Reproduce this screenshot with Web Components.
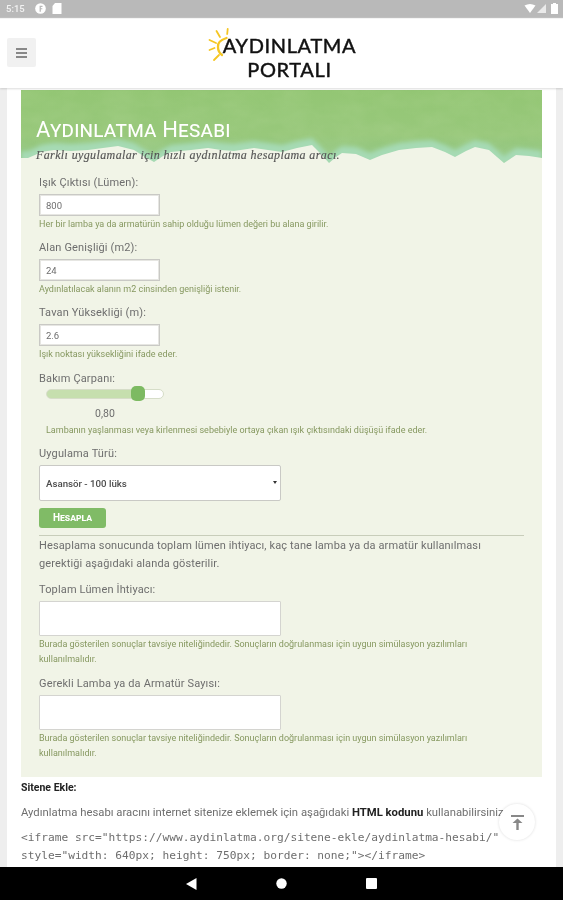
<!DOCTYPE html>
<html lang="tr">
<head>
<meta charset="utf-8">
<title>Aydınlatma Hesabı</title>
<style>
  html, body { margin: 0; padding: 0; background: #eee; }
  body { font-family: "Roboto", "Liberation Sans", sans-serif; }
  app-shell { filter: blur(0.5px); }
</style>
</head>
<body>
<app-shell>
  <status-bar slot="top"></status-bar>
  <site-header slot="top"></site-header>

  <calc-panel>
    <calc-field label="Işık Çıktısı (Lümen):" hint="Her bir lamba ya da armatürün sahip olduğu lümen değeri bu alana girilir.">800</calc-field>
    <calc-field label="Alan Genişliği (m2):" hint="Aydınlatılacak alanın m2 cinsinden genişliği istenir.">24</calc-field>
    <calc-field label="Tavan Yüksekliği (m):" hint="Işık noktası yüksekliğini ifade eder.">2.6</calc-field>
    <calc-slider label="Bakım Çarpanı:" value="0,80" hint="Lambanın yaşlanması veya kirlenmesi sebebiyle ortaya çıkan ışık çıktısındaki düşüşü ifade eder."></calc-slider>
    <calc-select label="Uygulama Türü:">Asansör - 100 lüks</calc-select>
    <calc-result intro="Hesaplama sonucunda toplam lümen ihtiyacı, kaç tane lamba ya da armatür kullanılması gerektiği aşağıdaki alanda gösterilir."></calc-result>
  </calc-panel>

  <embed-info></embed-info>
  <scroll-top slot="over"></scroll-top>
  <nav-bar slot="bottom"></nav-bar>
</app-shell>

<script>
const BASE_FONT = '"Roboto", "Liberation Sans", sans-serif';

class AppShell extends HTMLElement {
  constructor() {
    super();
    this.attachShadow({ mode: 'open' }).innerHTML = `
      <style>
        :host { display: flex; flex-direction: column; width: 563px; height: 900px; overflow: hidden; position: relative; background: #eee; }
        .page { flex: 1; min-height: 0; overflow: hidden; margin: 0 7px; background: #fff; padding: 2px 14px 0; }
      </style>
      <slot name="top"></slot>
      <div class="page"><slot></slot></div>
      <slot name="over"></slot>
      <slot name="bottom"></slot>
    `;
  }
}

class StatusBar extends HTMLElement {
  constructor() {
    super();
    this.attachShadow({ mode: 'open' }).innerHTML = `
      <style>
        :host { display: flex; align-items: center; height: 17px; background: #b9b9b9; color: #f2f2f2; padding: 0 5px 0 6px; font: 500 9.5px ${BASE_FONT}; box-sizing: border-box; box-shadow: 0 1px 1px rgba(0,0,0,.25); position: relative; z-index: 3; }
        .left { display: flex; align-items: center; gap: 10px; }
        .left svg + svg { margin-left: -4px; }
        .right { margin-left: auto; display: flex; align-items: center; }
        .right svg:first-child { margin-right: 1px; }
        .right svg:last-child { margin-left: 5px; }
        svg { display: block; }
      </style>
      <div class="left">
        <span>5:15</span>
        <svg width="11" height="11" viewBox="0 0 12 12"><circle cx="6" cy="6" r="5.8" fill="#fff"/><path d="M5 9.5V3h3.2v1.4H6.4v1.2H8v1.3H6.4v2.6z" fill="#b9b9b9"/></svg>
        <svg width="10" height="11" viewBox="0 0 9 11"><path d="M2.5 0H9v11H0V3z" fill="#fff"/></svg>
      </div>
      <div class="right">
        <svg width="12" height="9" viewBox="0 0 11 9"><path d="M0 1.6Q5.5-1.6 11 1.6L5.5 9z" fill="#fff"/></svg>
        <svg width="9" height="9" viewBox="0 0 9 9"><path d="M9 0V9H0z" fill="#fff" opacity=".7"/></svg>
        <svg width="7" height="11" viewBox="0 0 7 11"><path d="M2 0h3v1h2v10H0V1h2z" fill="#fff"/></svg>
      </div>
    `;
  }
}

class SiteHeader extends HTMLElement {
  constructor() {
    super();
    this.attachShadow({ mode: 'open' }).innerHTML = `
      <style>
        :host { display: grid; grid-template-columns: 1fr auto 1fr; align-items: center; height: 71px; background: #fff; box-sizing: border-box; padding: 0 7px; box-shadow: 0 1px 2px rgba(0,0,0,.14); position: relative; z-index: 2; }
        .menu { width: 29px; height: 29px; background: #f1f1f1; border-radius: 2px; display: flex; align-items: center; justify-content: center; justify-self: start; }
        .logo { display: flex; align-items: flex-start; align-self: start; }
        .sun { display: block; margin: 9px -10px 0 0; }
        .name { font: 400 20px/24px "Lato", "Liberation Sans", sans-serif; letter-spacing: .65px; color: #111; text-align: center; -webkit-text-stroke: .45px #111; padding-top: 16px; }
      </style>
      <div class="menu">
        <svg width="11" height="10" viewBox="0 0 11 10"><path d="M0 1h11M0 5h11M0 9h11" stroke="#666" stroke-width="1.6"/></svg>
      </div>
      <div class="logo">
        <svg class="sun" width="26" height="36" viewBox="0 0 26 36" fill="none" stroke="#f5c623" stroke-width="1.8" stroke-linecap="round">
          <path d="M19.500 12Q10 15 11 21Q11 26 15 29" stroke-width="2.300"/>
          <path d="M20.700 3L20.200 8M9.500 5L13 11M2.500 14L9 17M2.500 24L7.500 22M7 34L12 29"/>
        </svg>
        <div class="name">AYDINLATMA<br>PORTALI</div>
      </div>
      <div></div>
    `;
  }
}

class CalcPanel extends HTMLElement {
  constructor() {
    super();
    // y values of the torn paper edge, in hero coordinates
    const edge = '0 68 7 68 14 65 20 62 33 60 50 61 67 60 82 58 97 56 113 60 124 67 133 72 142 66 150 62 170 60 187 58 200 60 213 61 233 58 247 60 261 62 276 58 291 55 300 64 308 73 315 67 321 63 335 64 342 67 349 70 361 65 378 60 395 58 411 57 424 62 434 67 445 61 454 57 468 60 476 67 483 73 495 65 508 66 521 68';
    this.attachShadow({ mode: 'open' }).innerHTML = `
      <style>
        :host { display: block; background: #f1f4e7; height: 687px; box-sizing: border-box; width: 521px; }
        .hero { position: relative; height: 75px; box-sizing: border-box; padding: 28px 15px 0; overflow: hidden; }
        .hero svg { position: absolute; inset: 0; width: 100%; height: 100%; }
        h1 { position: relative; margin: 0; font: 400 22px/24px ${BASE_FONT}; font-variant: small-caps; color: #fff; letter-spacing: .2px; }
        p { position: relative; margin: 5px 0 0; font: italic 12px/16px "Liberation Serif", serif; color: #555; letter-spacing: .38px; -webkit-text-stroke: .15px #555; }
        .body { padding: 10px 18px 0; }
      </style>
      <div class="hero">
        <svg viewBox="0 0 521 75">
          <defs>
            <linearGradient id="g" x1="0" y1="0" x2="0" y2="1">
              <stop offset="0" stop-color="#93c674"/>
              <stop offset=".6" stop-color="#98c87b"/>
              <stop offset="1" stop-color="#8fc585"/>
            </linearGradient>
            <filter id="soft" x="-5%" y="-50%" width="110%" height="200%"><feGaussianBlur stdDeviation="2"/></filter>
            <filter id="mottle" x="0" y="0" width="100%" height="100%">
              <feTurbulence type="fractalNoise" baseFrequency=".035 .06" numOctaves="3" seed="4"/>
              <feColorMatrix values="0 0 0 0 1  0 0 0 0 1  0 0 0 0 .8  .5 0 0 0 -.14"/>
            </filter>
          </defs>
          <rect width="521" height="75" fill="url(#g)"/>
          <rect width="521" height="75" filter="url(#mottle)" opacity=".22"/>
          <polygon transform="translate(0 -7)" points="${edge} 521 82 0 82" fill="#a6dab4" filter="url(#soft)"/>
          <polygon points="${edge} 521 75 0 75" fill="#f1f4e7"/>
        </svg>
        <h1>Aydınlatma Hesabı</h1>
        <p>Farklı uygulamalar için hızlı aydınlatma hesaplama aracı.</p>
      </div>
      <div class="body"><slot></slot></div>
    `;
  }
}

class CalcField extends HTMLElement {
  constructor() {
    super();
    this.attachShadow({ mode: 'open' }).innerHTML = `
      <style>
        :host { display: block; margin-bottom: 9px; }
        .label { font: 400 11px/14px ${BASE_FONT}; color: #6e6e6e; letter-spacing: .15px; padding-top: 1px; margin-bottom: 4px; }
        .box { width: 121px; height: 22px; box-sizing: border-box; background: #fff; border: 1px solid #c9c9c5; box-shadow: inset 0 0 0 1px #e6e6e2; display: flex; align-items: center; padding: 0 6px; font: 400 9.5px ${BASE_FONT}; color: #6e6e6e; }
        .hint { font: 400 9px/14px ${BASE_FONT}; color: #869860; margin-top: 1px; }
      </style>
      <div class="label">${this.getAttribute('label')}</div>
      <div class="box"><slot></slot></div>
      <div class="hint">${this.getAttribute('hint')}</div>
    `;
  }
}

class CalcSlider extends HTMLElement {
  constructor() {
    super();
    this.attachShadow({ mode: 'open' }).innerHTML = `
      <style>
        :host { display: block; padding-top: 1px; }
        .label { font: 400 11px/14px ${BASE_FONT}; color: #6e6e6e; letter-spacing: .15px; padding-top: 1px; }
        .track { position: relative; width: 118px; height: 10px; margin: 3px 0 0 7px; box-sizing: border-box; background: linear-gradient(90deg, #c6dfae 0 90px, #fff 90px); border: 1px solid #d6ddc8; border-radius: 5px; }
        .thumb { position: absolute; left: 84px; top: -4px; width: 14px; height: 15px; border-radius: 5px; background: #7dba62; }
        .value { width: 132px; text-align: center; font: 400 10.5px/14px ${BASE_FONT}; color: #6e6e6e; margin-top: 8px; }
        .hint { font: 400 9px/14px ${BASE_FONT}; color: #869860; margin: 2px 0 0 7px; }
      </style>
      <div class="label">${this.getAttribute('label')}</div>
      <div class="track"><div class="thumb"></div></div>
      <div class="value">${this.getAttribute('value')}</div>
      <div class="hint">${this.getAttribute('hint')}</div>
    `;
  }
}

class CalcSelect extends HTMLElement {
  constructor() {
    super();
    this.attachShadow({ mode: 'open' }).innerHTML = `
      <style>
        :host { display: block; margin-top: 9px; }
        .label { font: 400 11px/14px ${BASE_FONT}; color: #6e6e6e; letter-spacing: .15px; padding-top: 1px; margin-bottom: 4px; }
        .box { width: 242px; height: 36px; box-sizing: border-box; background: #fff; border: 1px solid #c9c9c5; border-radius: 2px; display: flex; align-items: center; justify-content: space-between; padding: 1px 3px 0 6px; font: 500 9.7px ${BASE_FONT}; color: #4c4c4c; }
        .arrow { width: 0; height: 0; border: 2.5px solid transparent; border-top: 3.5px solid #333; border-bottom: 0; margin-bottom: 2px; }
        .btn { width: 67px; height: 20px; margin-top: 7px; border-radius: 3px; background: #80bb66; color: #fff; font: 700 10px/20px ${BASE_FONT}; font-variant: small-caps; text-align: center; }
      </style>
      <div class="label">${this.getAttribute('label')}</div>
      <div class="box"><span><slot></slot></span><i class="arrow"></i></div>
      <div class="btn">Hesapla</div>
    `;
  }
}

class CalcResult extends HTMLElement {
  constructor() {
    super();
    const note = 'Burada gösterilen sonuçlar tavsiye niteliğindedir. Sonuçların doğrulanması için uygun simülasyon yazılımları kullanılmalıdır.';
    this.attachShadow({ mode: 'open' }).innerHTML = `
      <style>
        :host { display: block; }
        hr { border: 0; border-top: 1px solid #c8cdba; margin: 7px 0 1px; }
        .intro { margin: 0; font: 400 11px/18px ${BASE_FONT}; color: #6e6e6e; letter-spacing: .13px; width: 450px; }
        .label { font: 400 11px/14px ${BASE_FONT}; color: #6e6e6e; letter-spacing: .15px; padding-top: 1px; margin-bottom: 4px; }
        .out { width: 242px; height: 35px; box-sizing: border-box; background: #fff; border: 1px solid #d4d4d0; border-radius: 1px; }
        .hint { font: 400 9px/15px ${BASE_FONT}; color: #869860; margin-top: 1px; width: 450px; }
        .first { margin-top: 9px; }
        .second { margin-top: 9px; }
      </style>
      <hr>
      <p class="intro">${this.getAttribute('intro')}</p>
      <div class="label first">Toplam Lümen İhtiyacı:</div>
      <div class="out"></div>
      <div class="hint">${note}</div>
      <div class="label second">Gerekli Lamba ya da Armatür Sayısı:</div>
      <div class="out"></div>
      <div class="hint">${note}</div>
    `;
  }
}

class EmbedInfo extends HTMLElement {
  constructor() {
    super();
    this.attachShadow({ mode: 'open' }).innerHTML = `
      <style>
        :host { display: block; font: 400 11.3px/18px ${BASE_FONT}; color: #6e6e6e; padding-top: 2px; }
        h2 { margin: 0; font: 700 10.5px/18px ${BASE_FONT}; color: #222; }
        p { margin: 7px 0 0; white-space: nowrap; }
        b { color: #222; }
        pre { margin: 7px 0 0; font: 400 11.2px/18px "DejaVu Sans Mono", "Liberation Mono", monospace; color: #6e6e6e; }
      </style>
      <h2>Sitene Ekle:</h2>
      <p>Aydınlatma hesabı aracını internet sitenize eklemek için aşağıdaki <b>HTML kodunu</b> kullanabilirsiniz.</p>
      <pre>&lt;iframe src="https://www.aydinlatma.org/sitene-ekle/aydinlatma-hesabi/"
style="width: 640px; height: 750px; border: none;"&gt;&lt;/iframe&gt;</pre>
    `;
  }
}

class ScrollTop extends HTMLElement {
  constructor() {
    super();
    this.attachShadow({ mode: 'open' }).innerHTML = `
      <style>
        :host { position: absolute; left: 499px; top: 804px; width: 36px; height: 36px; border-radius: 50%; background: #fff; box-shadow: 0 0 3px rgba(0,0,0,.14); display: flex; align-items: center; justify-content: center; }
      </style>
      <svg width="13" height="15" viewBox="0 0 13 15" fill="#888">
        <path d="M0 0h13v2H0zM5.300 15V8H1.500L6.500 3.500 11.500 8H7.700v7z"/>
      </svg>
    `;
  }
}

class NavBar extends HTMLElement {
  constructor() {
    super();
    this.attachShadow({ mode: 'open' }).innerHTML = `
      <style>
        :host { display: flex; justify-content: center; align-items: center; gap: 79px; height: 33px; background: #000; padding-right: 1px; box-sizing: border-box; }
        svg { display: block; }
      </style>
      <svg width="11" height="12" viewBox="0 0 11 12"><path d="M10.5 0V12L0 6z" fill="#fff"/></svg>
      <svg width="11" height="11" viewBox="0 0 11 11"><circle cx="5.500" cy="5.500" r="5.200" fill="#fff"/></svg>
      <svg width="11" height="11" viewBox="0 0 11 11"><rect width="11" height="11" rx="1" fill="#fff"/></svg>
    `;
  }
}

customElements.define('app-shell', AppShell);
customElements.define('status-bar', StatusBar);
customElements.define('site-header', SiteHeader);
customElements.define('calc-panel', CalcPanel);
customElements.define('calc-field', CalcField);
customElements.define('calc-slider', CalcSlider);
customElements.define('calc-select', CalcSelect);
customElements.define('calc-result', CalcResult);
customElements.define('embed-info', EmbedInfo);
customElements.define('scroll-top', ScrollTop);
customElements.define('nav-bar', NavBar);
</script>
</body>
</html>
